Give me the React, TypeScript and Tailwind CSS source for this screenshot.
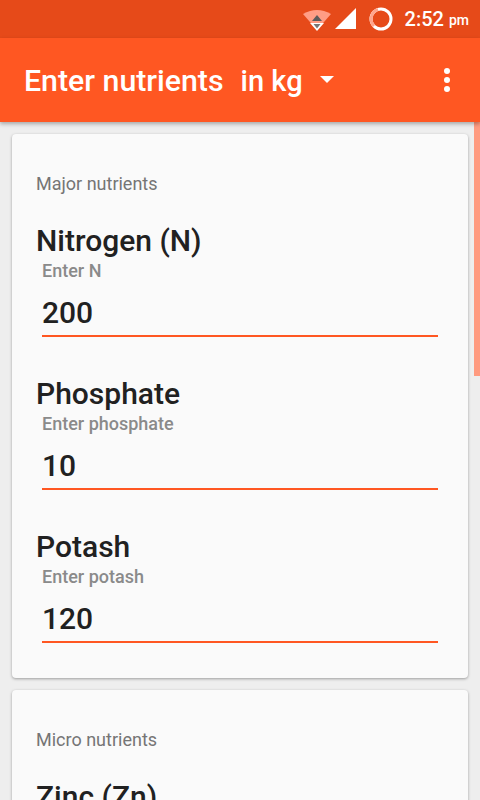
const font = "font-['Roboto',sans-serif]";

function Field({ title, hint, value }: { title: string; hint: string; value: string }) {
  return (
    <div className="flex flex-col">
      <div className="h-[38px] text-[30px] leading-[38px] font-medium text-[#212121]">{title}</div>
      <div className="ml-[6px] h-[20px] mt-[1px] text-[18px] leading-[20px] font-medium text-[#8a8a8a]">{hint}</div>
      <div className="ml-[6px] mr-[6px] h-[56px] text-[30px] leading-[42px] pt-[11px] font-medium text-[#212121] border-b-2 border-[#ff5722]">{value}</div>
    </div>
  );
}

function Card({ label, children }: { label: string; children: React.ReactNode }) {
  return (
    <div className="bg-[#fafafa] rounded-[4px] shadow-[0_1px_3px_rgba(0,0,0,0.35)] px-[24px] pt-[38px] pb-[35px]">
      <div className="h-[24px] text-[18px] leading-[24px] text-[#757575]">{label}</div>
      {children}
    </div>
  );
}

export default function App() {
  return (
    <div className={`w-[480px] h-[800px] overflow-hidden bg-[#eeeeee] flex flex-col relative ${font}`}>
      <div className="h-[38px] shrink-0 bg-[#e64a19] flex items-center justify-end text-white">
        <svg width="30" height="24" viewBox="0 0 30 24" className="mr-[1px]">
          <path d="M1 7 Q15 -1 29 7 L15 23 Z" fill="#ff9d85" />
          <path d="M15 8 L20 14 H10 Z" fill="#5b5b5b" />
          <path d="M8 16 H22 L15 24 Z" fill="#ffffff" />
          <path d="M11.5 17 H18.5 L15 21.5 Z" fill="#777777" />
        </svg>
        <svg width="22" height="22" viewBox="0 0 22 22" className="ml-[2px]">
          <path d="M0 21 L21 0 V21 Z" fill="#ffffff" />
        </svg>
        <svg width="24" height="24" viewBox="0 0 24 24" className="ml-[12px]">
          <circle cx="12" cy="12" r="10" fill="none" stroke="#ffffff" strokeWidth="3" />
          <path d="M9 2.5 A10 10 0 0 0 5 19" fill="none" stroke="#ffa58c" strokeWidth="3" />
        </svg>
        <span className="ml-[12px] text-[20px] font-medium leading-none">2:52</span>
        <span className="ml-[5px] mr-[11px] text-[14px] font-medium leading-none mt-[2px]">pm</span>
      </div>
      <div className="h-[84px] shrink-0 bg-[#ff5722] flex items-center pl-[24px] pt-[1px] text-white shadow-[0_2px_4px_rgba(0,0,0,0.3)] z-10">
        <div className="flex items-baseline">
          <span className="text-[30.3px] font-medium">Enter nutrients</span>
          <span className="ml-[17px] text-[29px] font-medium">in kg</span>
        </div>
        <svg width="14" height="8" viewBox="0 0 14 8" className="ml-[17px] mb-[2px]"><path d="M0 0 H14 L7 7 Z" fill="#ffffff" /></svg>
        <div className="ml-auto mr-[30px] mb-[2px] flex flex-col gap-[3px]">
          <div className="w-[6px] h-[6px] rounded-full bg-white" />
          <div className="w-[6px] h-[6px] rounded-full bg-white" />
          <div className="w-[6px] h-[6px] rounded-full bg-white" />
        </div>
      </div>
      <div className="flex flex-col gap-[12px] pt-[12px] pl-[12px] pr-[12px]">
        <Card label="Major nutrients">
          <div className="flex flex-col gap-[38px] pt-[26px]">
            <Field title="Nitrogen (N)" hint="Enter N" value="200" />
            <Field title="Phosphate" hint="Enter phosphate" value="10" />
            <Field title="Potash" hint="Enter potash" value="120" />
          </div>
        </Card>
        <Card label="Micro nutrients">
          <div className="flex flex-col gap-[38px] pt-[26px]">
            <Field title="Zinc (Zn)" hint="Enter Zn" value="" />
          </div>
        </Card>
      </div>
      <div className="absolute right-0 top-[122px] w-[6px] h-[254px] bg-[#ff9b80]" />
    </div>
  );
}
